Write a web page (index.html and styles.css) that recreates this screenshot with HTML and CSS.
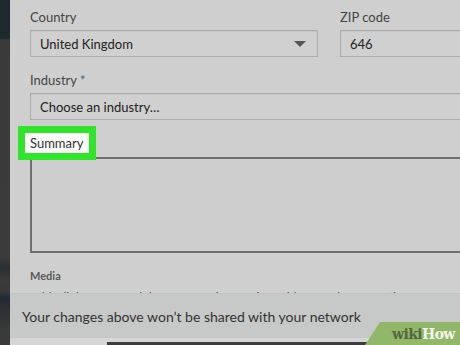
FILE: index.html
```html
<!DOCTYPE html>
<html>
<head>
<meta charset="utf-8">
<link rel="stylesheet" href="styles.css">
</head>
<body>
<div class="screen">
  <div class="rail"></div>
  <div class="panel">
    <div class="row-two">
      <div class="field">
        <div class="label">Country</div>
        <div class="input select"><span>United Kingdom</span><span class="caret"></span></div>
      </div>
      <div class="field">
        <div class="label">ZIP code</div>
        <div class="input"><span>646</span></div>
      </div>
    </div>
    <div class="field industry">
      <div class="label">Industry <span class="req">*</span></div>
      <div class="input"><span>Choose an industry…</span></div>
    </div>
    <div class="summary-label">Summary</div>
    <div class="textarea"></div>
    <div class="media">Media</div>
    <div class="media-desc">Add a link to external documents, photos, sites, videos, and presentations.</div>
    <div class="toast">Your changes above won’t be shared with your network</div>
    <div class="bottom-strip"><div class="dark-bar"></div></div>
    <div class="logo"><span class="wiki">wiki</span><span class="how">How</span></div>
  </div>
</div>
</body>
</html>
```
FILE: styles.css
```css
html, body {
  margin: 0;
  padding: 0;
}
body {
  width: 460px;
  height: 345px;
  overflow: hidden;
  font-family: Lato, "Open Sans", sans-serif;
  background: #cfcfcf;
}
.screen {
  display: flex;
  width: 460px;
  height: 345px;
}
.rail {
  width: 10px;
  flex: none;
  background: linear-gradient(to bottom, #1d2a30 0, #1d2a30 38px, #3a3a3a 40px, #3b3b3b 258px, #2a2e33 268px, #3a3a3a 280px, #383838 292px, #1f2838 298px, #2a2d33 306px, #3a3a3a 330px);
}
.panel {
  flex: 1;
  position: relative;
  background: #cfcfcf;
  padding-left: 20px;
  overflow: hidden;
}
.row-two {
  display: grid;
  grid-template-columns: 288px 140px;
  column-gap: 22px;
  padding-top: 9px;
}
.label {
  font-size: 13px;
  line-height: 17px;
  color: #454545;
  margin-bottom: 4px;
}
.req {
  color: #3f6a8c;
}
.input {
  height: 25px;
  border: 1px solid #acacac;
  background: #d0d0d0;
  display: flex;
  align-items: center;
  padding-left: 9px;
  font-size: 13px;
  color: #222;
  box-shadow: inset 0 1px 0 #c6c6c6;
}
.select {
  justify-content: space-between;
  padding-right: 11px;
}
.caret {
  width: 0;
  height: 0;
  border-left: 6px solid transparent;
  border-right: 6px solid transparent;
  border-top: 6px solid #555;
}
.industry {
  margin-top: 15px;
  margin-right: -20px;
}
.summary-label {
  position: relative;
  z-index: 1;
  display: inline-block;
  margin-top: 13px;
  margin-left: -5px;
  height: 20px;
  line-height: 20px;
  padding: 0 6px 0 5px;
  background: #fbfbfb;
  outline: 7px solid #2fe52a;
  font-size: 13px;
  color: #333;
}
.textarea {
  margin-top: 4px;
  height: 92px;
  border: 2px solid #6e6e6e;
  border-right: none;
  margin-right: -20px;
  background: #cecece;
}
.media {
  margin-top: 16px;
  font-size: 11px;
  font-weight: bold;
  color: #5a5a5a;
  line-height: 14px;
}
.media-desc {
  margin-top: 6px;
  font-size: 12px;
  color: #555;
  white-space: nowrap;
}
.toast {
  position: absolute;
  left: 0;
  right: 0;
  top: 294px;
  height: 44px;
  background: #c7c8c8;
  padding-left: 12px;
  font-size: 14px;
  line-height: 46px;
  color: #333;
  box-shadow: 0 -1px 0 #c2c2c2;
}
.bottom-strip {
  position: absolute;
  left: 0;
  right: 0;
  top: 338px;
  height: 7px;
  background: #d6d6d6;
}
.dark-bar {
  position: absolute;
  left: 97px;
  right: 0;
  bottom: 0;
  height: 3px;
  background: #3d3d3d;
}
.logo {
  position: absolute;
  right: 0;
  bottom: 0;
  width: 95px;
  height: 23px;
  background: #91b868;
  clip-path: polygon(15px 0, 100% 0, 100% 100%, 0 100%);
  font-family: "DejaVu Serif", serif;
  font-weight: bold;
  font-size: 14px;
  line-height: 24px;
  padding-left: 27px;
  box-sizing: border-box;
  letter-spacing: -0.6px;
}
.wiki {
  color: #55663f;
}
.how {
  color: #f4f5ec;
}
```
